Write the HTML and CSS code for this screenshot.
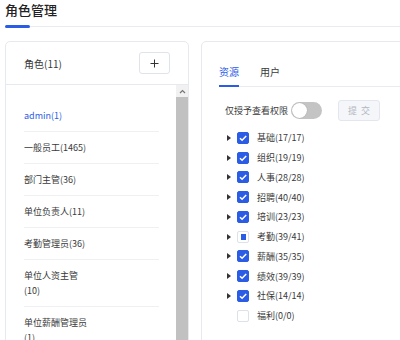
FILE: index.html
```html
<!DOCTYPE html>
<html lang="zh-CN">

<head>
    <meta charset="UTF-8">
    <meta name="viewport" content="width=device-width, initial-scale=1.0">
    <title>角色管理</title>
    <link rel="stylesheet" href="styles.css">
</head>

<body>
    <div class="page">
        <div class="page-head">
            <h1 class="page-title">角色管理</h1>
            <div class="title-line"><span class="bar"></span><span class="rule"></span></div>
        </div>
        <div class="main">
            <!-- 角色列表 -->
            <div class="card role-card">
                <div class="role-head">
                    <span>角色(11)</span>
                    <button class="add-btn">
                        <svg width="9" height="9" viewBox="0 0 9 9"><path d="M4.5 0.5v8M0.5 4.5h8" stroke="#333" stroke-width="1" fill="none"/></svg>
                    </button>
                </div>
                <div class="role-body">
                    <ul class="role-list">
                        <li class="active"><span class="name">admin(1)</span></li>
                        <li><span class="name">一般员工(1465)</span></li>
                        <li><span class="name">部门主管(36)</span></li>
                        <li><span class="name">单位负责人(11)</span></li>
                        <li><span class="name">考勤管理员(36)</span></li>
                        <li><span class="name">单位人资主管(10)</span></li>
                        <li><span class="name">单位薪酬管理员(1)</span></li>
                    </ul>
                    <div class="scrollbar">
                        <div class="sb-up">
                            <svg width="7" height="5" viewBox="0 0 7 5"><path d="M1 4l2.5-2.5L6 4" stroke="#777" stroke-width="1.2" fill="none"/></svg>
                        </div>
                        <div class="sb-thumb"></div>
                    </div>
                </div>
            </div>
            <!-- 权限 -->
            <div class="card perm-card">
                <div class="tabs">
                    <span class="tab active">资源</span>
                    <span class="tab">用户</span>
                </div>
                <div class="perm-bar">
                    <span>仅授予查看权限</span>
                    <span class="switch"><span class="knob"></span></span>
                    <button class="submit" disabled>提交</button>
                </div>
                <ul class="tree">
                    <li><span class="caret"></span><span class="check on"><svg width="12" height="12" viewBox="0 0 12 12"><path d="M3 6.2l2.1 2.1L9.2 4" stroke="#fff" stroke-width="1.5" fill="none"/></svg></span>基础(17/17)</li>
                    <li><span class="caret"></span><span class="check on"><svg width="12" height="12" viewBox="0 0 12 12"><path d="M3 6.2l2.1 2.1L9.2 4" stroke="#fff" stroke-width="1.5" fill="none"/></svg></span>组织(19/19)</li>
                    <li><span class="caret"></span><span class="check on"><svg width="12" height="12" viewBox="0 0 12 12"><path d="M3 6.2l2.1 2.1L9.2 4" stroke="#fff" stroke-width="1.5" fill="none"/></svg></span>人事(28/28)</li>
                    <li><span class="caret"></span><span class="check on"><svg width="12" height="12" viewBox="0 0 12 12"><path d="M3 6.2l2.1 2.1L9.2 4" stroke="#fff" stroke-width="1.5" fill="none"/></svg></span>招聘(40/40)</li>
                    <li><span class="caret"></span><span class="check on"><svg width="12" height="12" viewBox="0 0 12 12"><path d="M3 6.2l2.1 2.1L9.2 4" stroke="#fff" stroke-width="1.5" fill="none"/></svg></span>培训(23/23)</li>
                    <li><span class="caret"></span><span class="check half"><span class="dot"></span></span>考勤(39/41)</li>
                    <li><span class="caret"></span><span class="check on"><svg width="12" height="12" viewBox="0 0 12 12"><path d="M3 6.2l2.1 2.1L9.2 4" stroke="#fff" stroke-width="1.5" fill="none"/></svg></span>薪酬(35/35)</li>
                    <li><span class="caret"></span><span class="check on"><svg width="12" height="12" viewBox="0 0 12 12"><path d="M3 6.2l2.1 2.1L9.2 4" stroke="#fff" stroke-width="1.5" fill="none"/></svg></span>绩效(39/39)</li>
                    <li><span class="caret"></span><span class="check on"><svg width="12" height="12" viewBox="0 0 12 12"><path d="M3 6.2l2.1 2.1L9.2 4" stroke="#fff" stroke-width="1.5" fill="none"/></svg></span>社保(14/14)</li>
                    <li><span class="caret none"></span><span class="check"></span>福利(0/0)</li>
                </ul>
            </div>
        </div>
    </div>
</body>

</html>
```

FILE: styles.css
```css
* {
    box-sizing: border-box;
}

body {
    margin: 0;
    overflow: hidden;
    font-family: "Noto Sans CJK SC", "Noto Sans", sans-serif;
    color: #3a3a3a;
    background-color: #fff;
}

ul {
    margin: 0;
    padding: 0;
    list-style: none;
}

button {
    font-family: inherit;
    padding: 0;
}

.page {
    padding: 0 0 0 5px;
}

.page-title {
    margin: 0;
    font-size: 13px;
    line-height: 20px;
    font-weight: 500;
    color: #222;
}

.title-line {
    display: flex;
    align-items: center;
    height: 3px;
    margin-top: 5px;
}

.title-line .bar {
    width: 25px;
    height: 3px;
    border-radius: 2px;
    background-color: #2b5ce6;
}

.title-line .rule {
    flex: 1;
    height: 1px;
    background-color: #e8ebf0;
}

.main {
    display: flex;
    gap: 12px;
    margin-top: 13px;
}

.card {
    flex: none;
    height: 320px;
    border: 1px solid #e6e9ef;
    border-radius: 5px;
    background-color: #fff;
}

/* 左侧角色 */
.role-card {
    display: flex;
    flex-direction: column;
    width: 184px;
}

.role-head {
    display: flex;
    align-items: center;
    justify-content: space-between;
    height: 43px;
    padding: 0 18px;
    border-bottom: 1px solid #e6e9ef;
    font-size: 10px;
}

.add-btn {
    display: flex;
    align-items: center;
    justify-content: center;
    width: 31px;
    height: 22px;
    border: 1px solid #dfe3ea;
    border-radius: 3px;
    background-color: #fff;
}

.role-body {
    display: flex;
    flex: 1;
    overflow: hidden;
}

.role-list {
    flex: 1;
    padding: 15px 17px 0 18px;
    font-size: 9px;
}

.role-list li {
    padding: 8px 0;
    line-height: 15px;
    border-bottom: 1px solid #eef0f4;
}

.role-list .name {
    display: block;
    max-width: 65px;
}

.role-list .active {
    color: #2b5ce6;
}

.scrollbar {
    display: flex;
    flex-direction: column;
    width: 12px;
    background-color: #f1f1f1;
}

.sb-up {
    display: flex;
    align-items: center;
    justify-content: center;
    height: 12px;
}

.sb-thumb {
    flex: 1;
    background-color: #c1c1c1;
}

/* 右侧权限 */
.perm-card {
    width: 260px;
    padding: 0 17px;
    font-size: 9px;
}

.tabs {
    display: flex;
    gap: 21px;
    margin-top: 22px;
    border-bottom: 1px solid #e8ebf0;
    font-size: 10px;
}

.tab {
    padding-bottom: 6px;
    line-height: 15px;
    border-bottom: 2px solid transparent;
    margin-bottom: -1px;
}

.tab.active {
    color: #2b5ce6;
    border-bottom-color: #2b5ce6;
}

.perm-bar {
    display: flex;
    align-items: center;
    height: 22px;
    margin-top: 12px;
    padding-left: 6px;
}

.switch {
    position: relative;
    width: 31px;
    height: 17px;
    margin-left: 3px;
    border-radius: 9px;
    background-color: #c4c4c4;
}

.switch .knob {
    position: absolute;
    left: 1px;
    top: 1px;
    width: 15px;
    height: 15px;
    border-radius: 50%;
    background-color: #fff;
    box-shadow: 0 0 1px rgba(0, 0, 0, 0.3);
}

.submit {
    width: 42px;
    height: 21px;
    margin-left: 16px;
    padding-left: 4px;
    border: 1px solid #e3e6ee;
    border-radius: 3px;
    background-color: #f4f6fa;
    color: #b3b7bf;
    font-size: 9px;
    letter-spacing: 4px;
}

.tree {
    margin-top: 7px;
}

.tree li {
    display: flex;
    align-items: center;
    height: 19.75px;
    padding-left: 8px;
}

.caret {
    width: 0;
    height: 0;
    margin-right: 6px;
    border-top: 3px solid transparent;
    border-bottom: 3px solid transparent;
    border-left: 4px solid #333;
}

.caret.none {
    border-left-color: transparent;
}

.check {
    display: flex;
    align-items: center;
    justify-content: center;
    width: 12px;
    height: 12px;
    margin-right: 8px;
    border: 1px solid #dde1e8;
    border-radius: 2px;
    background-color: #fff;
}

.check.on {
    border-color: #2b5ce6;
    background-color: #2b5ce6;
}

.check svg {
    flex: none;
}

.check .dot {
    width: 5px;
    height: 6px;
    background-color: #2b5ce6;
}
```
